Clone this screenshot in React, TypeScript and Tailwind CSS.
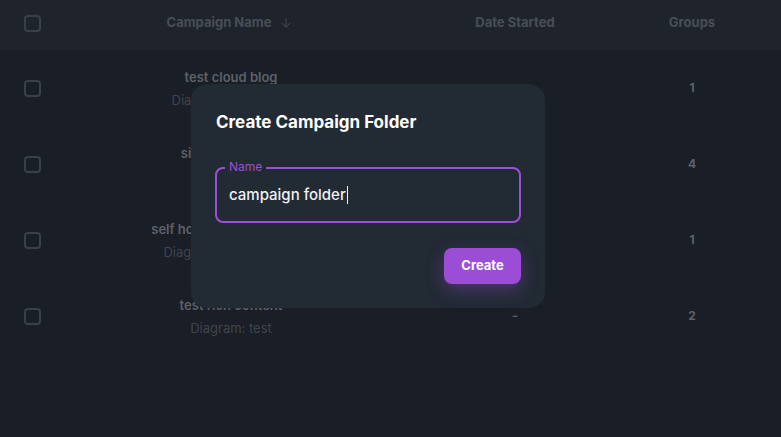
import { ArrowDown } from "lucide-react";

interface Campaign {
  name: string;
  diagram: string;
  date: string;
  groups: number;
}

const campaigns: Campaign[] = [
  { name: "test cloud blog", diagram: "Diagram: test blogs", date: "-", groups: 1 },
  { name: "silo content test", diagram: "Diagram: test", date: "-", groups: 4 },
  { name: "self hosted cloud content", diagram: "Diagram: test diagram", date: "-", groups: 1 },
  { name: "test rich content", diagram: "Diagram: test", date: "-", groups: 2 },
];

function Checkbox() {
  return <div className="w-[17px] h-[17px] rounded-[4px] border-2 border-[#3a4049]" />;
}

export default function App() {
  return (
    <div
      className="relative w-[781px] h-[437px] overflow-hidden bg-[#1a1e26] text-white"
      style={{ fontFamily: "Inter, 'Noto Sans', sans-serif" }}
    >
      {/* table behind the dialog */}
      <div className="flex items-center h-[50px] pb-[4px] bg-[#1f242c] text-[13px] font-bold text-[#484e57]">
        <div className="w-[64px] pl-[24px]">
          <Checkbox />
        </div>
        <div className="w-[334px] flex items-center justify-center gap-[8px] pr-[2px]">
          <span>Campaign Name</span>
          <ArrowDown className="w-[14px] h-[14px]" strokeWidth={1.6} />
        </div>
        <div className="w-[234px] text-center">Date Started</div>
        <div className="w-[120px] text-center">Groups</div>
      </div>

      {campaigns.map((c) => (
        <div key={c.name} className="flex items-center h-[76px]">
          <div className="w-[64px] pl-[24px]">
            <Checkbox />
          </div>
          <div className="w-[334px] flex flex-col items-center gap-[3px] pt-[2px] text-[13px]">
            <span className="font-semibold text-[#5c6169]">{c.name}</span>
            <span className="text-[#40454d]">{c.diagram}</span>
          </div>
          <div className="w-[234px] text-center text-[13px] font-semibold text-[#5c6169]">{c.date}</div>
          <div className="w-[120px] text-center text-[12px] font-bold text-[#5c6169]">{c.groups}</div>
        </div>
      ))}

      {/* dialog */}
      <div className="absolute left-[191px] top-[84px] w-[354px] h-[224px] rounded-[16px] bg-[#222a34] px-[24px] pt-[27px]">
        <h2 className="ml-[1px] text-[17px] font-bold text-white leading-[22px]">Create Campaign Folder</h2>

        <div className="relative mt-[34px] h-[56px] w-[306px] rounded-[8px] border-2 border-[#9d4fd8] flex items-center px-[12px]">
          <span className="absolute left-[8px] -top-[9px] bg-[#222a34] px-[4px] text-[12px] leading-[14px] text-[#9d4fd8]">
            Name
          </span>
          <span className="text-[15px] font-medium text-[#eef0f3]">campaign folder</span>
          <span className="ml-[1px] w-[1px] h-[18px] bg-[#eef0f3]" />
        </div>

        <div className="flex justify-end mt-[25px]">
          <button className="w-[77px] h-[36px] rounded-[8px] bg-[#9c4dd6] text-[13px] font-bold text-white shadow-[0_6px_18px_rgba(156,77,214,0.35)]">
            Create
          </button>
        </div>
      </div>
    </div>
  );
}
